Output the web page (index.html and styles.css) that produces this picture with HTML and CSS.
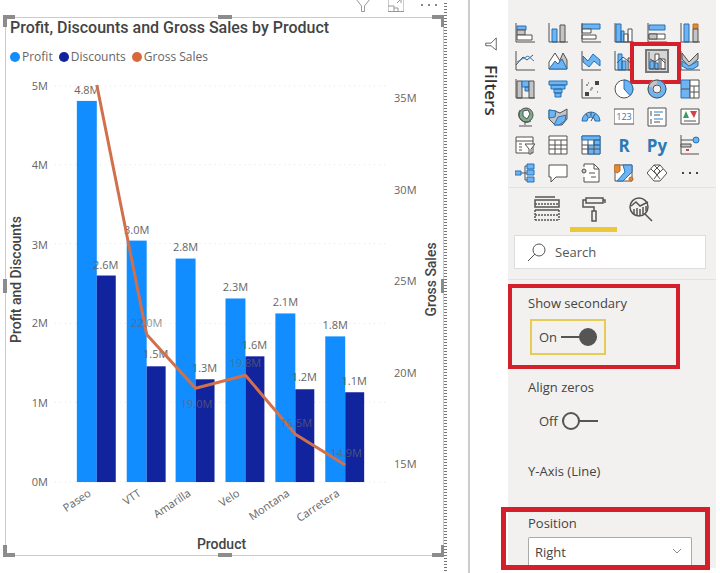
FILE: index.html
```html
<!DOCTYPE html>
<html lang="en">
<head>
    <meta charset="UTF-8">
    <meta name="viewport" content="width=device-width, initial-scale=1.0">
    <title>Profit, Discounts and Gross Sales by Product</title>
    <link rel="stylesheet" href="styles.css">
</head>
<body>
    <main class="report">
        <div class="visual-tools">
            <button aria-label="Filters on this visual"><svg viewBox="0 0 16 16"><path d="M1 2h14L9.500 9v5.500h-3V9z"/></svg></button>
            <button aria-label="Focus mode"><svg viewBox="0 0 16 16"><path d="M0 1v13.500h16V1M0 9h6v5.500M6 11h4v3.500M9 6l4-4M13 6V2H9"/></svg></button>
            <button aria-label="More options"><svg viewBox="0 0 16 16"><path class="dots" d="M0 7h2v2H0zM7 7h2v2H7zM14 7h2v2h-2z"/></svg></button>
        </div>
        <section class="visual">
            <span class="handle top-left"></span>
            <span class="handle top"></span>
            <span class="handle top-right"></span>
            <span class="handle left"></span>
            <span class="handle right"></span>
            <span class="handle bottom-left"></span>
            <span class="handle bottom"></span>
            <span class="handle bottom-right"></span>
            <h1>Profit, Discounts and Gross Sales by Product</h1>
            <ul class="legend">
                <li><i class="dot profit"></i>Profit</li>
                <li><i class="dot discounts"></i>Discounts</li>
                <li><i class="dot sales"></i>Gross Sales</li>
            </ul>
            <svg class="chart" viewBox="6 70 438 486" role="img" aria-label="Column and line chart">
                <!-- grid -->
                <path class="grid" d="M55 86H388M55 165H388M55 244H388M55 324H388M55 403H388M55 483H388"/>

                <!-- left axis -->
                <g class="axis end">
                    <text x="48" y="90">5M</text>
                    <text x="48" y="169">4M</text>
                    <text x="48" y="249">3M</text>
                    <text x="48" y="328">2M</text>
                    <text x="48" y="408">1M</text>
                    <text x="48" y="487">0M</text>
                </g>

                <!-- right axis -->
                <g class="axis">
                    <text x="395" y="102">35M</text>
                    <text x="395" y="194">30M</text>
                    <text x="395" y="286">25M</text>
                    <text x="395" y="378">20M</text>
                    <text x="395" y="469">15M</text>
                </g>

                <!-- columns -->
                <g class="bar-profit">
                    <rect x="77" y="101" width="20" height="382"/>
                    <rect x="127" y="241" width="20" height="242"/>
                    <rect x="176" y="259" width="20" height="224"/>
                    <rect x="226" y="299" width="20" height="184"/>
                    <rect x="276" y="314" width="20" height="169"/>
                    <rect x="326" y="337" width="20" height="146"/>
                </g>
                <g class="bar-discounts">
                    <rect x="97" y="276" width="19" height="207"/>
                    <rect x="147" y="367" width="19" height="116"/>
                    <rect x="196" y="380" width="19" height="103"/>
                    <rect x="246" y="357" width="19" height="126"/>
                    <rect x="296" y="390" width="19" height="93"/>
                    <rect x="346" y="393" width="19" height="90"/>
                </g>

                <!-- column labels -->
                <g class="label">
                    <text x="87" y="94">4.8M</text>
                    <text x="137" y="234">3.0M</text>
                    <text x="186" y="251">2.8M</text>
                    <text x="236" y="292">2.3M</text>
                    <text x="286" y="307">2.1M</text>
                    <text x="336" y="330">1.8M</text>
                    <text x="106" y="269">2.6M</text>
                    <text x="156" y="359">1.5M</text>
                    <text x="205" y="373">1.3M</text>
                    <text x="255" y="350">1.6M</text>
                    <text x="305" y="382">1.2M</text>
                    <text x="355" y="386">1.1M</text>
                </g>

                <!-- gross sales -->
                <polyline class="line" points="97,85 147,335 196,389 246,376 296,435 346,466"/>
                <g class="label faded">
                    <text x="147" y="328">22.0M</text>
                    <text x="197" y="409">19.0M</text>
                    <text x="246" y="368">19.8M</text>
                    <text x="297" y="428">16.5M</text>
                    <text x="347" y="458">14.9M</text>
                </g>

                <!-- categories -->
                <g class="category">
                    <text transform="translate(92 496) rotate(-34)">Paseo</text>
                    <text transform="translate(142 496) rotate(-34)">VTT</text>
                    <text transform="translate(192 496) rotate(-34)">Amarilla</text>
                    <text transform="translate(241 496) rotate(-34)">Velo</text>
                    <text transform="translate(291 496) rotate(-34)">Montana</text>
                    <text transform="translate(341 496) rotate(-34)">Carretera</text>
                </g>

                <!-- axis titles -->
                <g class="axis-title">
                    <text transform="translate(21 280) rotate(-90)">Profit and Discounts</text>
                    <text transform="translate(437 280) rotate(-90)">Gross Sales</text>
                    <text x="222" y="550">Product</text>
                </g>
            </svg>
        </section>
    </main>

    <aside class="filters">
        <svg viewBox="0 0 16 16"><path d="M14 1v14L8 10H2V7h6z"/></svg>
        <h2>Filters</h2>
    </aside>

    <aside class="pane">
        <div class="gallery">
            <button aria-label="Stacked bar chart"><svg viewBox="0 0 20 20"><path class="b" d="M2 3h9v4H2z"/><path class="g" d="M2 7h8v5H2z"/><path class="w" d="M2 12h15v5H2z"/><path d="M1 0v19h19"/></svg></button>
            <button aria-label="Stacked column chart"><svg viewBox="0 0 20 20"><path class="b" d="M4 6h5v13H4z"/><path class="g" d="M12 2h5v17h-5z"/><path d="M1 0v19h19"/></svg></button>
            <button aria-label="Clustered bar chart"><svg viewBox="0 0 20 20"><path class="b" d="M1 1h18v5H1z"/><path class="w" d="M1 6h9v4H1zM1 12h14v4H1z"/><path d="M1 0v19h19"/></svg></button>
            <button aria-label="Clustered column chart"><svg viewBox="0 0 20 20"><path class="b" d="M2 1h5v18H2zM7 8h3v11H7z"/><path class="w" d="M10 11h4v8h-4zM14 6h4v13h-4z"/><path d="M1 0v19h19"/></svg></button>
            <button aria-label="100% stacked bar chart"><svg viewBox="0 0 20 20"><path class="b" d="M2 2h16v5H2z"/><path class="w" d="M2 11h16v5H2z"/><path class="g" d="M2 11h8v5H2z"/><path d="M1 0v19h19"/></svg></button>
            <button aria-label="100% stacked column chart"><svg viewBox="0 0 20 20"><path class="b" d="M4 1h5v18H4z"/><path class="o" d="M13 1h5v5h-5z"/><path class="g" d="M13 6h5v13h-5z"/><path d="M1 0v19h19"/></svg></button>

            <button aria-label="Line chart"><svg viewBox="0 0 20 20"><path d="M1 0v19h19M1 14l7-8 4 3 6-5"/><path class="bs" d="M2 11l5-3 6-3 6 5"/></svg></button>
            <button aria-label="Area chart"><svg viewBox="0 0 20 20"><path class="g" d="M8 18l7-16 4 7v9z"/><path class="w" d="M1 11l6-9 5 8-4 8H1z"/><path class="b" d="M1 18l6-8 3 3 4-5 5 10z"/></svg></button>
            <button aria-label="Stacked area chart"><svg viewBox="0 0 20 20"><path class="b" d="M2 5l5 5 5-7 7 6v6l-6-5-5 6-6-5z"/><path d="M1 0v19h19"/></svg></button>
            <button aria-label="Line and stacked column chart"><svg viewBox="0 0 20 20"><path class="b" d="M4 3h4v16H4zM8 10h4v9H8z"/><path class="g" d="M14 7h4v12h-4z"/><path d="M1 0v19h19M3 12l6-6 9 7"/></svg></button>
            <button class="selected" aria-label="Line and clustered column chart"><svg viewBox="0 0 20 20"><path class="b" d="M3 10h4v8H3z"/><path class="w" d="M8 3h4v15H8zM14 8h4v10h-4z"/><path class="b" d="M8 12h3v6H8z"/><path d="M2 1v17h17M3 8l5 3 5-4 5 5"/></svg><span class="callout"></span></button>
            <button aria-label="Ribbon chart"><svg viewBox="0 0 20 20"><path class="g" d="M2 2l7 9 9-9v6l-9 8-7-8z"/><path class="b" d="M2 10l7 5 9-5v5l-5 3H7l-5-3z"/><path d="M1 0v19h19"/></svg></button>

            <button aria-label="Waterfall chart"><svg viewBox="0 0 20 20"><path class="g" d="M2 2h5v17H2z"/><path class="b" d="M7 2h7v6H7zM10 8h4v4h-4z"/><path class="g" d="M14 2h5v17h-5z"/><path d="M1 0v19h19"/></svg></button>
            <button aria-label="Funnel chart"><svg viewBox="0 0 20 20"><path class="b" d="M1 2h18v4H1zM3 6h14v4H3zM6 10h8v4H6zM7 14h6v4H7z"/></svg></button>
            <button aria-label="Scatter chart"><svg viewBox="0 0 20 20"><path d="M1 0v19h19"/><path class="k" d="M14 2h4v4h-4zM4 13h4v4H4z"/><path class="gs" d="M5 6h2M10 9h2M16 13h1M9 11l2-1M7 4h1"/></svg></button>
            <button aria-label="Pie chart"><svg viewBox="0 0 20 20"><circle class="w" cx="10" cy="10" r="9"/><path class="b" d="M10 1a9 9 0 0 1 6 15.500L10 10z"/></svg></button>
            <button aria-label="Donut chart"><svg viewBox="0 0 20 20"><circle class="ring" cx="10" cy="10" r="7"/><path class="ring-grey" d="M10 3a7 7 0 0 0-6.500 5"/><circle cx="10" cy="10" r="9"/><circle cx="10" cy="10" r="4"/></svg></button>
            <button aria-label="Treemap"><svg viewBox="0 0 20 20"><path class="b" d="M1 1h9v18H1z"/><path class="w" d="M10 1h9v18h-9z"/><path d="M1 10h9M10 7h9M10 13h9M14 7v12"/></svg></button>

            <button aria-label="Map"><svg viewBox="0 0 20 20"><circle class="gr" cx="11" cy="8" r="7"/><path class="w" d="M8 4l5-1 2 4-3 5-4-3z"/><path d="M5 3a8 8 0 0 0 11 11M10 15v3M4 19h13"/></svg></button>
            <button aria-label="Filled map"><svg viewBox="0 0 20 20"><path class="g" d="M1 3l6 1 5 2 7-4v10l-5 6H7l-6-6z"/><path class="b" d="M1 3l7 1-1 6-6 1zM10 10l8-2-1 6-6 4H6z"/></svg></button>
            <button aria-label="Gauge"><svg viewBox="0 0 20 20"><path class="b" d="M1 14a9 9 0 0 1 18 0h-5a4 4 0 0 0-8 0z"/><path d="M10 14l4-7M5 7l2 3M10 5v4"/></svg></button>
            <button aria-label="Card"><svg viewBox="0 0 20 20"><path class="w" d="M0 2h20v15H0z"/><text class="digits" x="10" y="13">123</text></svg></button>
            <button aria-label="Multi-row card"><svg viewBox="0 0 20 20"><path class="w" d="M1 1h18v18H1z"/><path d="M4 4v5M4 12v5M7 8h6M7 15h6"/><path class="bs" d="M7 5h9M7 12h9"/></svg></button>
            <button aria-label="KPI"><svg viewBox="0 0 20 20"><path class="w" d="M1 2h18v15H1z"/><path class="green" d="M3 11l3-7 3 7z"/><path class="red" d="M10 4h7l-3 7z"/><path d="M4 14h12"/></svg></button>

            <button aria-label="Slicer"><svg viewBox="0 0 20 20"><path class="w" d="M1 2h17v16H1z"/><path d="M1 6h17M4 9h3M4 12h3M4 15h3"/><path class="w" d="M10 9h10l-4 5v5h-2v-5z"/></svg></button>
            <button aria-label="Table"><svg viewBox="0 0 20 20"><path class="w" d="M1 1h18v18H1z"/><path d="M1 5h18M1 10h18M1 14h18M7 5v14M13 5v14"/></svg></button>
            <button aria-label="Matrix"><svg viewBox="0 0 20 20"><path class="w" d="M1 1h18v18H1z"/><path class="b" d="M1 1h18v4H1zM7 10h12v9H7zM13 5h6v5h-6z"/><path d="M1 14h18M1 10h6M7 5v14M13 5v14"/></svg></button>
            <button class="lang" aria-label="R script visual">R</button>
            <button class="lang" aria-label="Python visual">Py</button>
            <button aria-label="Key influencers"><svg viewBox="0 0 20 20"><path d="M1 0v19h18M1 5h13"/><path class="g" d="M1 9h10v3H1z"/><circle class="b" cx="16" cy="5" r="3"/><path class="red" d="M6 14h3v2H6z"/></svg></button>

            <button aria-label="Decomposition tree"><svg viewBox="0 0 20 20"><path d="M6 10h6M10 3v14M10 3h3M10 17h3"/><path class="b" d="M0 8h6v4H0zM12 1h7v5h-7zM12 7h7v5h-7zM12 14h7v5h-7z"/></svg></button>
            <button aria-label="Q&amp;A"><svg viewBox="0 0 20 20"><path class="w" d="M1 2h18v12H8l-5 5v-5H1z"/></svg></button>
            <button aria-label="Paginated report"><svg viewBox="0 0 20 20"><path class="w" d="M3 1h10l5 5v13H3v-5M3 4V1"/><path d="M13 1v5h5M8 10h6M10 14h5"/><circle class="g" cx="3" cy="8" r="2"/></svg></button>
            <button aria-label="ArcGIS map"><svg viewBox="0 0 20 20"><path class="w" d="M1 2h17v16H1z"/><path class="b" d="M9 2h9v7l-9 9H3l8-9z"/><path class="o" d="M0 2h6v6l-3 2-3-2z"/><circle class="o" cx="17" cy="16" r="2"/></svg></button>
            <button aria-label="Power Apps"><svg viewBox="0 0 20 20"><path class="w" d="M0 10l7-8h6l7 8-7 8H7z"/><path d="M7 2l6 6-6 8M13 2L7 8l6 8M4 6l6 6M16 6l-6 6"/></svg></button>
            <button aria-label="Get more visuals"><svg viewBox="0 0 20 20"><path class="k" d="M2 9h2v2H2zM9 9h2v2H9zM16 9h2v2h-2z"/></svg></button>
        </div>

        <nav class="tabs">
            <button aria-label="Fields"><svg viewBox="0 0 26 26"><path d="M1 1h20M1 4h24v7H1zM1 14h24"/><path class="dash" d="M1 8h24M1 19h24M1 24h24M25 14v10M1 14v10"/></svg></button>
            <button class="active" aria-label="Format"><svg viewBox="0 0 26 26"><path d="M5 2h17v5H5zM5 4H2v7h11v4M11 15h4v10h-4zM22 4h2v3"/></svg></button>
            <button aria-label="Analytics"><svg viewBox="0 0 26 26"><circle cx="11" cy="11" r="9"/><path d="M3 10l5-4 4 4 8-4M6 13v5M9 12v7M12 13v7M15 11v7M18 10v5M17 18l7 7"/></svg></button>
        </nav>

        <label class="search">
            <svg viewBox="0 0 18 18"><circle cx="11" cy="7" r="6"/><path d="M7 11l-7 7"/></svg>
            <input type="search" placeholder="Search" aria-label="Search">
        </label>

        <div class="options">
            <div class="option">
                <label for="secondary">Show secondary</label>
                <div class="toggle focused">On <input type="checkbox" id="secondary" checked></div>
                <span class="callout"></span>
            </div>
            <div class="option">
                <label for="zeros">Align zeros</label>
                <div class="toggle">Off <input type="checkbox" id="zeros"></div>
            </div>
            <h3>Y-Axis (Line)</h3>
            <div class="option position">
                <label for="position">Position</label>
                <div class="select">
                    <select id="position">
                        <option>Right</option>
                        <option>Left</option>
                    </select>
                    <svg viewBox="0 0 10 6"><path d="M1 1l4 4 4-4"/></svg>
                </div>
                <span class="callout"></span>
            </div>
        </div>
    </aside>
</body>
</html>
```

FILE: styles.css
```css
* {
    box-sizing: border-box;
}

body {
    display: flex;
    margin: 0;
    min-height: 100vh;
    padding-right: 4px;
    background: #fff;
    color: #444;
    font-family: "Open Sans", "Noto Sans", sans-serif;
    font-size: 13px;
}

button {
    padding: 0;
    border: none;
    background: none;
    color: inherit;
    font: inherit;
    cursor: pointer;
}

svg {
    display: block;
    fill: none;
    stroke: #555;
}

/* Report canvas */
.report {
    position: relative;
    flex: 1;
    min-width: 0;
    padding: 0 24px 0 5px;
}

.report::after {
    content: "";
    position: absolute;
    top: 3px;
    right: 21px;
    bottom: 0;
    width: 3px;
    background: repeating-linear-gradient(#777 0 1px, #fff 1px 3px);
}

.visual-tools {
    display: flex;
    justify-content: flex-end;
    gap: 17px;
    height: 17px;
    padding-right: 7px;
    overflow: hidden;
}

.visual-tools button {
    width: 16px;
    height: 16px;
    margin-top: -3px;
}

.visual-tools svg {
    width: 16px;
    height: 16px;
    stroke: #999;
}

.visual-tools .dots {
    fill: #888;
    stroke: none;
}

.visual {
    position: relative;
    border: 1px solid #ccc;
}

.visual h1 {
    margin: 0;
    padding: 0 4px;
    color: #444;
    font-family: Roboto, sans-serif;
    font-size: 16px;
    font-weight: 500;
    line-height: 20px;
}

.legend {
    display: flex;
    gap: 6px;
    margin: 0;
    padding: 9px 4px 3px;
    list-style: none;
    color: #666;
    font-size: 12px;
    line-height: 20px;
}

.legend li {
    display: flex;
    align-items: center;
    gap: 2px;
}

.dot {
    width: 10px;
    height: 10px;
    border-radius: 50%;
}

.dot.profit {
    background: #118dff;
}

.dot.discounts {
    background: #12239e;
}

.dot.sales {
    background: #d9683c;
}

.handle {
    position: absolute;
    border: 0 solid #8c8c8c;
}

.top-left,
.top-right,
.bottom-left,
.bottom-right {
    width: 12px;
    height: 12px;
}

.top-left,
.top,
.top-right {
    top: -3px;
    border-top-width: 4px;
}

.bottom-left,
.bottom,
.bottom-right {
    bottom: -2px;
    border-bottom-width: 4px;
}

.top-left,
.left,
.bottom-left {
    left: -3px;
    border-left-width: 4px;
}

.top-right,
.right,
.bottom-right {
    right: -1px;
    border-right-width: 3px;
}

.top,
.bottom {
    left: calc(50% - 7px);
    width: 14px;
}

.left,
.right {
    top: calc(50% - 7px);
    height: 14px;
}

/* Chart */
.chart {
    width: 100%;
    stroke: none;
}

.chart text {
    fill: #666;
    font-size: 11px;
}

.chart .grid {
    stroke: #e4e4e4;
    stroke-dasharray: 1 4;
}

.chart .end text,
.chart .category text {
    text-anchor: end;
}

.chart .label text,
.chart .axis-title text {
    text-anchor: middle;
}

.chart .faded {
    opacity: 0.7;
}

.chart .axis-title text {
    fill: #444;
    font-family: Roboto, sans-serif;
    font-size: 14px;
    font-weight: 500;
}

.bar-profit {
    fill: #118dff;
}

.bar-discounts {
    fill: #12239e;
}

.line {
    stroke: #d0704d;
    stroke-width: 3;
    stroke-linejoin: round;
}

/* Filters strip */
.filters {
    display: flex;
    flex: 0 0 40px;
    flex-direction: column;
    align-items: center;
    gap: 14px;
    padding: 37px 0 0 4px;
    border-left: 2px solid #ccc;
}

.filters svg {
    width: 14px;
    height: 14px;
}

.filters h2 {
    margin: 0;
    color: #333;
    font-size: 17px;
    font-weight: 600;
    line-height: 20px;
    writing-mode: vertical-rl;
}

/* Visualizations pane */
.pane {
    flex: 0 0 208px;
    align-self: flex-start;
    background: #f2f1f0;
}

.gallery {
    display: grid;
    grid-template-columns: repeat(6, 20px);
    gap: 8px 13px;
    padding: 23px 7px 4px;
    border-bottom: 1px solid #e2e2e2;
}

.gallery button {
    position: relative;
    width: 20px;
    height: 20px;
}

.gallery svg {
    width: 20px;
    height: 20px;
    stroke: #505050;
    stroke-width: 1;
}

.gallery .b {
    fill: #6fb4f2;
    stroke: #2470b3;
}

.gallery .g {
    fill: #c4c4c4;
}

.gallery .w {
    fill: #fff;
}

.gallery .k {
    fill: #444;
    stroke: none;
}

.gallery .o {
    fill: #e08a3c;
    stroke: #b96a24;
}

.gallery .gr {
    fill: #7fae8c;
}

.gallery .green {
    fill: #3f9a5c;
    stroke: none;
}

.gallery .red {
    fill: #d1434b;
    stroke: none;
}

.gallery .bs {
    stroke: #2f7fc4;
}

.gallery .gs {
    stroke: #999;
    stroke-width: 2;
}

.gallery .ring {
    stroke: #6fb4f2;
    stroke-width: 5;
}

.gallery .ring-grey {
    stroke: #c4c4c4;
    stroke-width: 5;
}

.gallery .digits {
    fill: #2a7ab5;
    stroke: none;
    font-size: 9px;
    text-anchor: middle;
}

.gallery .lang {
    display: flex;
    align-items: center;
    justify-content: center;
    color: #2a7ab5;
    font-size: 17px;
    font-weight: 700;
}

.gallery .selected {
    outline: 2px solid #777;
    background: #d6d6d6;
}

.callout {
    position: absolute;
    border: 4px solid #d3202a;
    pointer-events: none;
}

.selected .callout {
    inset: -9px -14px -13px -17px;
}

.tabs {
    display: flex;
    padding: 8px 15px 0;
}

.tabs button {
    display: flex;
    justify-content: center;
    width: 47px;
    height: 36px;
    border-bottom: 5px solid transparent;
}

.tabs .active {
    border-color: #ebc934;
}

.tabs svg {
    width: 26px;
    height: 26px;
    stroke-width: 1.5;
}

.tabs .dash {
    stroke-dasharray: 2 1;
}

.search {
    display: flex;
    align-items: center;
    gap: 9px;
    height: 34px;
    margin: 3px 10px 10px 6px;
    padding: 0 13px;
    border: 1px solid #ddd;
    background: #fff;
}

.search svg {
    flex: none;
    width: 18px;
    height: 18px;
}

.search input {
    width: 100%;
    min-width: 0;
    padding: 0;
    border: none;
    outline: none;
    background: none;
    font: inherit;
}

.search input::placeholder {
    color: #555;
}

.options {
    padding: 13px 20px 0;
    border-top: 1px solid #e2e2e2;
    line-height: 20px;
}

.option {
    position: relative;
    margin-bottom: 22px;
}

.option > label {
    display: block;
}

.option:first-child .callout {
    inset: -9px 16px -14px -20px;
}

.toggle {
    display: flex;
    align-items: center;
    gap: 4px;
    width: 76px;
    height: 36px;
    margin: 6px 0 0 2px;
    padding-left: 7px;
    border: 2px solid transparent;
}

.toggle.focused {
    border-color: #e6cc55;
}

.toggle input {
    display: flex;
    align-items: center;
    appearance: none;
    width: 36px;
    height: 14px;
    margin: 0;
    background: linear-gradient(#555, #555) center / 100% 2px no-repeat;
}

.toggle input::before {
    content: "";
    width: 14px;
    height: 14px;
    border: 2px solid #555;
    border-radius: 50%;
    background: #f2f1f0;
}

.toggle input:checked {
    justify-content: flex-end;
}

.toggle input:checked::before {
    background: #555;
}

.options h3 {
    margin: 0 0 32px;
    font-size: 13px;
    font-weight: 400;
    line-height: 20px;
}

.option.position {
    margin: 0;
    padding-bottom: 3px;
}

.position .callout {
    inset: -6px -14px -2px -27px;
    border-width: 5px;
}

.select {
    position: relative;
    margin: 4px 4px 0 0;
}

.select select {
    appearance: none;
    width: 100%;
    height: 28px;
    padding: 0 6px;
    border: 1px solid #aaa;
    border-bottom: none;
    border-radius: 2px 2px 0 0;
    background: #fff;
    color: inherit;
    font: inherit;
}

.select svg {
    position: absolute;
    top: 11px;
    right: 10px;
    width: 10px;
    height: 6px;
    stroke: #888;
}
```
